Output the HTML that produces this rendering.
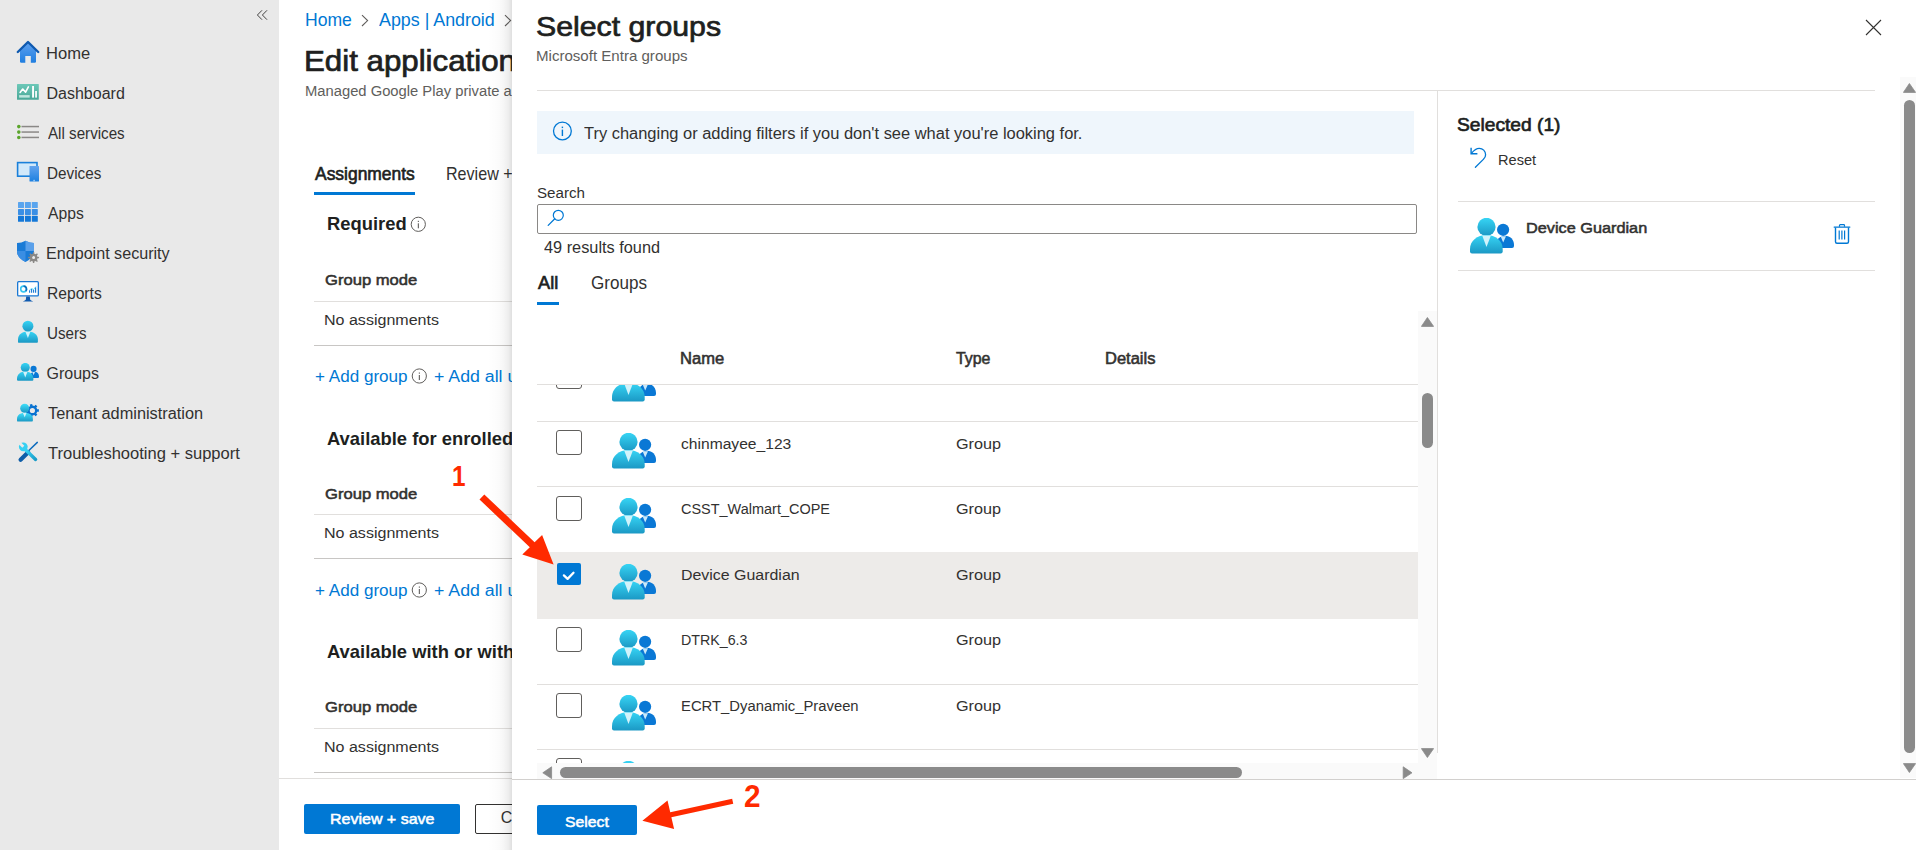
<!DOCTYPE html>
<html><head><meta charset="utf-8"><style>
html,body{margin:0;padding:0;width:1916px;height:850px;overflow:hidden;background:#fff;font-family:'Liberation Sans', sans-serif;}
body{position:relative;}
svg{display:block;}
</style></head><body>
<div style="position:absolute;left:0px;top:0px;width:279px;height:850px;background:#e9e9e9;"></div>
<svg style="position:absolute;left:255px;top:8px;" width="14" height="14" viewBox="0 0 14 14"><path d="M7,2.3 L2.4,7 L7,11.7 M12,2.3 L7.4,7 L12,11.7" fill="none" stroke="#3b3a39" stroke-width="0.95"/></svg>
<span style="position:absolute;left:46.47px;top:45.60px;font-size:16px;line-height:16px;font-weight:400;color:#323130;white-space:pre;transform:scaleX(1.0341);transform-origin:0 0;">Home</span>
<span style="position:absolute;left:46.50px;top:85.60px;font-size:16px;line-height:16px;font-weight:400;color:#323130;white-space:pre;">Dashboard</span>
<span style="position:absolute;left:47.50px;top:125.60px;font-size:16px;line-height:16px;font-weight:400;color:#323130;white-space:pre;transform:scaleX(0.9481);transform-origin:0 0;">All services</span>
<span style="position:absolute;left:46.55px;top:165.60px;font-size:16px;line-height:16px;font-weight:400;color:#323130;white-space:pre;transform:scaleX(0.9536);transform-origin:0 0;">Devices</span>
<span style="position:absolute;left:47.50px;top:205.60px;font-size:16px;line-height:16px;font-weight:400;color:#323130;white-space:pre;transform:scaleX(0.9806);transform-origin:0 0;">Apps</span>
<span style="position:absolute;left:46.49px;top:245.60px;font-size:16px;line-height:16px;font-weight:400;color:#323130;white-space:pre;transform:scaleX(1.0074);transform-origin:0 0;">Endpoint security</span>
<span style="position:absolute;left:46.52px;top:285.60px;font-size:16px;line-height:16px;font-weight:400;color:#323130;white-space:pre;transform:scaleX(0.9764);transform-origin:0 0;">Reports</span>
<span style="position:absolute;left:46.55px;top:325.60px;font-size:16px;line-height:16px;font-weight:400;color:#323130;white-space:pre;transform:scaleX(0.9475);transform-origin:0 0;">Users</span>
<span style="position:absolute;left:46.50px;top:365.60px;font-size:16px;line-height:16px;font-weight:400;color:#323130;white-space:pre;">Groups</span>
<span style="position:absolute;left:47.50px;top:405.60px;font-size:16px;line-height:16px;font-weight:400;color:#323130;white-space:pre;transform:scaleX(1.0199);transform-origin:0 0;">Tenant administration</span>
<span style="position:absolute;left:47.50px;top:445.60px;font-size:16px;line-height:16px;font-weight:400;color:#323130;white-space:pre;transform:scaleX(1.0328);transform-origin:0 0;">Troubleshooting + support</span>
<svg style="position:absolute;left:16px;top:40px;" width="24" height="24" viewBox="0 0 24 24"><defs><linearGradient id="hm" x1="0" y1="0" x2="0" y2="1"><stop offset="0" stop-color="#5ea0ef"/><stop offset="1" stop-color="#1f7ee0"/></linearGradient></defs>
<path d="M4,9.5 L12,2.5 L20,9.5 L20,21.5 Q20,22.8 18.7,22.8 L5.3,22.8 Q4,22.8 4,21.5 Z" fill="url(#hm)"/>
<rect x="9.3" y="16" width="5.5" height="7" fill="#e9e9e9"/>
<path d="M1.8,12 L12,2 L22.2,12" fill="none" stroke="#0f5ab0" stroke-width="2.4" stroke-linejoin="round" stroke-linecap="round"/></svg>
<svg style="position:absolute;left:17px;top:84px;" width="22" height="16" viewBox="0 0 22 16"><defs><linearGradient id="db" x1="0" y1="0" x2="0" y2="1"><stop offset="0" stop-color="#6cc8b8"/><stop offset="1" stop-color="#4aa898"/></linearGradient></defs>
<rect x="0" y="0" width="21.8" height="15.8" rx="0.6" fill="url(#db)"/>
<path d="M3.1,8.4 L5.7,5 L8.6,8.1 L11.4,2.9" fill="none" stroke="#fff" stroke-width="1.6" stroke-linejoin="round" stroke-linecap="round"/>
<rect x="2.1" y="11.1" width="10.6" height="2.5" fill="#bfe6de"/>
<rect x="15.1" y="2" width="1.9" height="11.6" fill="#fff"/><rect x="18.2" y="7" width="1.7" height="6.6" fill="#fff"/></svg>
<svg style="position:absolute;left:16px;top:124px;" width="24" height="16" viewBox="0 0 24 16"><circle cx="2.8" cy="2.6" r="1.8" fill="#5ba52c"/><circle cx="2.8" cy="8.1" r="1.8" fill="#5ba52c"/><circle cx="2.8" cy="13.5" r="1.8" fill="#5ba52c"/>
<rect x="5.5" y="1.8" width="17.5" height="1.5" fill="#8a8886"/><rect x="5.5" y="7.3" width="17.5" height="1.5" fill="#8a8886"/><rect x="5.5" y="12.7" width="17.5" height="1.5" fill="#8a8886"/></svg>
<svg style="position:absolute;left:16px;top:161px;" width="24" height="22" viewBox="0 0 24 22"><rect x="1.6" y="1.6" width="19.4" height="13.6" fill="#d2e9fa" stroke="#1a80da" stroke-width="1.6"/>
<defs><linearGradient id="dv" x1="0" y1="0" x2="0" y2="1"><stop offset="0" stop-color="#63a4ee"/><stop offset="1" stop-color="#1c80e0"/></linearGradient></defs><rect x="13.5" y="5" width="9.5" height="15.6" rx="0.5" fill="url(#dv)"/><rect x="17.3" y="18.8" width="1.6" height="1.8" fill="#9ccaf5"/></svg>
<svg style="position:absolute;left:18px;top:202px;" width="20" height="20" viewBox="0 0 20 20"><rect x="0.0" y="0.0" width="6" height="6" rx="0.6" fill="#5aa5ee"/><rect x="6.9" y="0.0" width="6" height="6" rx="0.6" fill="#5aa5ee"/><rect x="13.8" y="0.0" width="6" height="6" rx="0.6" fill="#5aa5ee"/><rect x="0.0" y="6.9" width="6" height="6" rx="0.6" fill="#3a8fe5"/><rect x="6.9" y="6.9" width="6" height="6" rx="0.6" fill="#3a8fe5"/><rect x="13.8" y="6.9" width="6" height="6" rx="0.6" fill="#3a8fe5"/><rect x="0.0" y="13.8" width="6" height="6" rx="0.6" fill="#1478d8"/><rect x="6.9" y="13.8" width="6" height="6" rx="0.6" fill="#1478d8"/><rect x="13.8" y="13.8" width="6" height="6" rx="0.6" fill="#1478d8"/></svg>
<svg style="position:absolute;left:16px;top:240px;" width="24" height="24" viewBox="0 0 24 24"><path d="M1,3 Q5.5,3 9.5,0.8 Q13.5,3 18,3 L18,11 Q18,18 9.5,22 Q1,18 1,11 Z" fill="#1a7bd6"/>
<path d="M9.5,0.8 Q13.5,3 18,3 L18,11 L9.5,11 Z" fill="#5aa0ea"/>
<path d="M1,11 L9.5,11 L9.5,22 Q1,18 1,11 Z" fill="#3a8ee3"/>
<path d="M21.32,16.14 L21.54,16.90 L23.05,16.87 L23.05,18.33 L21.54,18.30 L21.32,19.06 L21.26,19.20 L20.88,19.89 L21.97,20.94 L20.94,21.97 L19.89,20.88 L19.20,21.26 L19.06,21.32 L18.30,21.54 L18.33,23.05 L16.87,23.05 L16.90,21.54 L16.14,21.32 L16.00,21.26 L15.31,20.88 L14.26,21.97 L13.23,20.94 L14.32,19.89 L13.94,19.20 L13.88,19.06 L13.66,18.30 L12.15,18.33 L12.15,16.87 L13.66,16.90 L13.88,16.14 L13.94,16.00 L14.32,15.31 L13.23,14.26 L14.26,13.23 L15.31,14.32 L16.00,13.94 L16.14,13.88 L16.90,13.66 L16.87,12.15 L18.33,12.15 L18.30,13.66 L19.06,13.88 L19.20,13.94 L19.89,14.32 L20.94,13.23 L21.97,14.26 L20.88,15.31 L21.26,16.00 Z M19.10,17.60 A1.5,1.5 0 1 0 16.10,17.60 A1.5,1.5 0 1 0 19.10,17.60 Z" fill="#8a8886" fill-rule="evenodd"/></svg>
<svg style="position:absolute;left:16px;top:280px;" width="24" height="23" viewBox="0 0 24 23"><rect x="1.65" y="1.65" width="20.7" height="14.3" rx="1" fill="#fff" stroke="#1a78d4" stroke-width="1.3"/>
<circle cx="7.6" cy="9" r="2.9" fill="none" stroke="#38c6f0" stroke-width="1.6"/>
<path d="M7.6,6.1 A2.9,2.9 0 0 1 9.7,11" fill="none" stroke="#0f6cbd" stroke-width="1.6"/>
<path d="M13.6,12.8 L13.6,10.3 M15.6,12.8 L15.6,9 M17.6,12.8 L17.6,9.8 M19.6,12.8 L19.6,7.2" stroke="#1a78d4" stroke-width="1.1"/>
<path d="M13.5,10 L15.6,8.5 L17.6,9.5 L20,6.5" fill="none" stroke="#40d0f5" stroke-width="0.8"/>
<path d="M10.2,16.5 L13.8,16.5 L14.2,19.8 Q15.5,20.8 17.2,21.5 L6.8,21.5 Q8.5,20.8 9.8,19.8 Z" fill="#0f5ab0"/></svg>
<svg style="position:absolute;left:17px;top:320px;" width="22" height="24" viewBox="0 0 22 24"><defs><linearGradient id="us" x1="0" y1="0" x2="0" y2="1"><stop offset="0" stop-color="#37d5f5"/><stop offset="1" stop-color="#1b98c4"/></linearGradient></defs>
<circle cx="10.9" cy="6.2" r="5.5" fill="url(#us)"/>
<path d="M1.5,22.7 Q1,22.7 1,21.5 L1,19.5 C1,14.5 5,11.5 10.9,11.5 C16.8,11.5 20.9,14.5 20.9,19.5 L20.9,21.5 Q20.9,22.7 20,22.7 Z" fill="url(#us)"/>
<path d="M8.4,11.8 L13.4,11.8 L10.9,18 Z" fill="#d2f3fb"/></svg>
<div style="position:absolute;left:17px;top:363px;width:22px;height:18px;overflow:hidden">
<svg style="position:absolute;left:0px;top:0px;" width="23" height="19" viewBox="0 0 23 19"><defs>
<linearGradient id="gc00" x1="0" y1="0" x2="0" y2="1"><stop offset="0" stop-color="#37d5f5"/><stop offset="1" stop-color="#1b98c4"/></linearGradient>
</defs>
<g transform="scale(0.5)">
<circle cx="33.1" cy="11.8" r="6.1" fill="#0a78d5"/>
<path d="M26.2,29.9 L26.2,27 C26.2,21.5 30,17.7 35.1,17.7 C40.2,17.7 44,21.5 44,27 L44,28 Q44,29.9 42,29.9 Z" fill="#0a78d5"/>
<path d="M30.6,18.2 L36,18.2 L33.2,24.6 Z" fill="#c9e8fa"/>
<circle cx="16.5" cy="8.9" r="9.1" fill="url(#gc00)"/>
<path d="M2,35.6 Q0,35.6 0,33.2 L0,31 C0,22.6 7.2,16.9 16.4,16.9 C25.6,16.9 32.7,22.6 32.7,31 L32.7,33.2 Q32.7,35.6 30.7,35.6 Z" fill="url(#gc00)"/>
<path d="M12.2,17.4 L20.9,17.4 L16.5,29.1 Z" fill="#d2f3fb"/>
</g></svg>
</div>
<svg style="position:absolute;left:16px;top:401px;" width="24" height="22" viewBox="0 0 24 22"><defs><linearGradient id="ta" x1="0" y1="0" x2="0" y2="1"><stop offset="0" stop-color="#40e0fa"/><stop offset="1" stop-color="#1b98c4"/></linearGradient></defs>
<path d="M20.86,7.47 L21.15,8.30 L22.89,8.29 L22.89,10.71 L21.15,10.70 L20.86,11.53 L20.77,11.72 L20.30,12.47 L21.39,13.81 L19.49,15.33 L18.43,13.96 L17.60,14.25 L17.38,14.30 L16.51,14.40 L16.14,16.09 L13.77,15.55 L14.18,13.87 L13.43,13.40 L13.26,13.26 L12.64,12.64 L11.08,13.41 L10.03,11.22 L11.60,10.48 L11.50,9.61 L11.50,9.39 L11.60,8.52 L10.03,7.78 L11.08,5.59 L12.64,6.36 L13.26,5.74 L13.43,5.60 L14.18,5.13 L13.77,3.45 L16.14,2.91 L16.51,4.60 L17.38,4.70 L17.60,4.75 L18.43,5.04 L19.49,3.67 L21.39,5.19 L20.30,6.53 L20.77,7.28 Z M19.00,9.50 A2.6,2.6 0 1 0 13.80,9.50 A2.6,2.6 0 1 0 19.00,9.50 Z" fill="#0a72d0" fill-rule="evenodd"/>
<circle cx="8.7" cy="7.2" r="4.5" fill="url(#ta)"/>
<path d="M1.5,20.6 Q1,20.6 1,19.5 L1,18 C1,14 4.5,11.8 8.7,11.8 C13,11.8 16.9,14 16.9,18 L16.9,19.5 Q16.9,20.6 16,20.6 Z" fill="url(#ta)"/>
<path d="M6.9,12 L10.5,12 L8.7,16.3 Z" fill="#d2f3fb"/></svg>
<svg style="position:absolute;left:16px;top:440px;" width="24" height="24" viewBox="0 0 24 24"><defs><linearGradient id="wr" x1="0" y1="0" x2="1" y2="1"><stop offset="0" stop-color="#3ad6f6"/><stop offset="1" stop-color="#1a9cc8"/></linearGradient></defs>
<path d="M21.3,2.4 L12.6,10.7" stroke="#0f6cbd" stroke-width="1.5" stroke-linecap="round"/>
<path d="M12.2,12.3 L4.6,19.8" stroke="#0f5ea8" stroke-width="4.2" stroke-linecap="round"/>
<path d="M9.5,9.8 L19.6,19.4" stroke="url(#wr)" stroke-width="3.4" stroke-linecap="round"/>
<circle cx="7.3" cy="6.8" r="4.4" fill="#36d0f2"/>
<path d="M7.3,6.8 L2.8,2.3" stroke="#e9e9e9" stroke-width="2.8" stroke-linecap="butt"/></svg>
<span style="position:absolute;left:304.65px;top:11.28px;font-size:18.5px;line-height:18.5px;font-weight:400;color:#0078d4;white-space:pre;transform:scaleX(0.9500);transform-origin:0 0;">Home</span>
<svg style="position:absolute;left:359px;top:13px;" width="12" height="15" viewBox="0 0 12 15"><path d="M3,2.2 L8.6,7.6 L3,13" fill="none" stroke="#605e5c" stroke-width="1.1"/></svg>
<span style="position:absolute;left:379.00px;top:11.28px;font-size:18.5px;line-height:18.5px;font-weight:400;color:#0078d4;white-space:pre;transform:scaleX(0.9647);transform-origin:0 0;">Apps | Android</span>
<svg style="position:absolute;left:502px;top:13px;" width="12" height="15" viewBox="0 0 12 15"><path d="M3,2.2 L8.6,7.6 L3,13" fill="none" stroke="#605e5c" stroke-width="1.1"/></svg>
<span style="position:absolute;left:304.08px;top:45.83px;font-size:29.5px;line-height:29.5px;font-weight:400;color:#201f1e;white-space:pre;-webkit-text-stroke:0.72px #201f1e;transform:scaleX(1.0591);transform-origin:0 0;">Edit application</span>
<span style="position:absolute;left:304.55px;top:83.70px;font-size:14px;line-height:14px;font-weight:400;color:#605e5c;white-space:pre;transform:scaleX(1.0544);transform-origin:0 0;">Managed Google Play private app</span>
<span style="position:absolute;left:314.90px;top:165.28px;font-size:18.5px;line-height:18.5px;font-weight:400;color:#201f1e;white-space:pre;-webkit-text-stroke:0.65px #201f1e;transform:scaleX(0.9425);transform-origin:0 0;">Assignments</span>
<span style="position:absolute;left:445.53px;top:165.28px;font-size:18.5px;line-height:18.5px;font-weight:400;color:#323130;white-space:pre;transform:scaleX(0.8700);transform-origin:0 0;">Review + save</span>
<div style="position:absolute;left:314px;top:192px;width:101px;height:3px;background:#0078d4;"></div>
<span style="position:absolute;left:326.61px;top:214.58px;font-size:18.5px;line-height:18.5px;font-weight:700;color:#201f1e;white-space:pre;transform:scaleX(0.9936);transform-origin:0 0;">Required</span>
<span style="position:absolute;left:324.70px;top:272.22px;font-size:15.5px;line-height:15.5px;font-weight:400;color:#323130;white-space:pre;-webkit-text-stroke:0.54px #323130;transform:scaleX(1.0709);transform-origin:0 0;">Group mode</span>
<div style="position:absolute;left:314px;top:301px;width:198px;height:1px;background:#e1dfdd;"></div>
<span style="position:absolute;left:323.67px;top:311.82px;font-size:15.5px;line-height:15.5px;font-weight:400;color:#323130;white-space:pre;transform:scaleX(1.0345);transform-origin:0 0;">No assignments</span>
<div style="position:absolute;left:314px;top:345px;width:198px;height:1px;background:#c8c6c4;"></div>
<span style="position:absolute;left:315.13px;top:369.40px;font-size:16px;line-height:16px;font-weight:400;color:#0078d4;white-space:pre;transform:scaleX(1.0671);transform-origin:0 0;">+ Add group</span>
<svg style="position:absolute;left:411px;top:368px;" width="17" height="17" viewBox="0 0 17 17"><circle cx="8.3" cy="8" r="7.1" fill="none" stroke="#605e5c" stroke-width="1"/><rect x="7.8" y="7" width="1.1" height="5" fill="#605e5c"/><rect x="7.8" y="4.5" width="1.1" height="1.2" fill="#605e5c"/></svg>
<span style="position:absolute;left:433.59px;top:369.40px;font-size:16px;line-height:16px;font-weight:400;color:#0078d4;white-space:pre;transform:scaleX(1.1083);transform-origin:0 0;">+ Add all users</span>
<span style="position:absolute;left:326.81px;top:430.47px;font-size:18.5px;line-height:18.5px;font-weight:700;color:#201f1e;white-space:pre;transform:scaleX(0.9936);transform-origin:0 0;">Available for enrolled devices</span>
<span style="position:absolute;left:324.70px;top:485.82px;font-size:15.5px;line-height:15.5px;font-weight:400;color:#323130;white-space:pre;-webkit-text-stroke:0.54px #323130;transform:scaleX(1.0709);transform-origin:0 0;">Group mode</span>
<div style="position:absolute;left:314px;top:514px;width:198px;height:1px;background:#e1dfdd;"></div>
<span style="position:absolute;left:323.67px;top:525.43px;font-size:15.5px;line-height:15.5px;font-weight:400;color:#323130;white-space:pre;transform:scaleX(1.0345);transform-origin:0 0;">No assignments</span>
<div style="position:absolute;left:314px;top:558px;width:198px;height:1px;background:#c8c6c4;"></div>
<span style="position:absolute;left:315.13px;top:583.00px;font-size:16px;line-height:16px;font-weight:400;color:#0078d4;white-space:pre;transform:scaleX(1.0671);transform-origin:0 0;">+ Add group</span>
<svg style="position:absolute;left:411px;top:582px;" width="17" height="17" viewBox="0 0 17 17"><circle cx="8.3" cy="8" r="7.1" fill="none" stroke="#605e5c" stroke-width="1"/><rect x="7.8" y="7" width="1.1" height="5" fill="#605e5c"/><rect x="7.8" y="4.5" width="1.1" height="1.2" fill="#605e5c"/></svg>
<span style="position:absolute;left:433.59px;top:583.00px;font-size:16px;line-height:16px;font-weight:400;color:#0078d4;white-space:pre;transform:scaleX(1.1083);transform-origin:0 0;">+ Add all users</span>
<span style="position:absolute;left:326.81px;top:642.77px;font-size:18.5px;line-height:18.5px;font-weight:700;color:#201f1e;white-space:pre;transform:scaleX(0.9936);transform-origin:0 0;">Available with or without enrollment</span>
<span style="position:absolute;left:324.70px;top:699.42px;font-size:15.5px;line-height:15.5px;font-weight:400;color:#323130;white-space:pre;-webkit-text-stroke:0.54px #323130;transform:scaleX(1.0709);transform-origin:0 0;">Group mode</span>
<div style="position:absolute;left:314px;top:728px;width:198px;height:1px;background:#e1dfdd;"></div>
<span style="position:absolute;left:323.67px;top:739.03px;font-size:15.5px;line-height:15.5px;font-weight:400;color:#323130;white-space:pre;transform:scaleX(1.0345);transform-origin:0 0;">No assignments</span>
<div style="position:absolute;left:314px;top:772px;width:198px;height:1px;background:#c8c6c4;"></div>
<span style="position:absolute;left:315.13px;top:796.60px;font-size:16px;line-height:16px;font-weight:400;color:#0078d4;white-space:pre;transform:scaleX(1.0671);transform-origin:0 0;">+ Add group</span>
<svg style="position:absolute;left:411px;top:795px;" width="17" height="17" viewBox="0 0 17 17"><circle cx="8.3" cy="8" r="7.1" fill="none" stroke="#605e5c" stroke-width="1"/><rect x="7.8" y="7" width="1.1" height="5" fill="#605e5c"/><rect x="7.8" y="4.5" width="1.1" height="1.2" fill="#605e5c"/></svg>
<span style="position:absolute;left:433.59px;top:796.60px;font-size:16px;line-height:16px;font-weight:400;color:#0078d4;white-space:pre;transform:scaleX(1.1083);transform-origin:0 0;">+ Add all users</span>
<svg style="position:absolute;left:410px;top:216px;" width="17" height="17" viewBox="0 0 17 17"><circle cx="8.3" cy="8.3" r="7.1" fill="none" stroke="#605e5c" stroke-width="1"/><rect x="7.8" y="7.3" width="1.1" height="5" fill="#605e5c"/><rect x="7.8" y="4.8" width="1.1" height="1.2" fill="#605e5c"/></svg>
<div style="position:absolute;left:279px;top:778px;width:233px;height:72px;background:#fff;"></div>
<div style="position:absolute;left:279px;top:778px;width:233px;height:1px;background:#e1dfdd;"></div>
<div style="position:absolute;left:304px;top:804px;width:156px;height:30px;background:#0078d4;border-radius:2px"></div>
<span style="position:absolute;left:329.93px;top:810.85px;font-size:15px;line-height:15px;font-weight:400;color:#fff;white-space:pre;-webkit-text-stroke:0.53px #fff;transform:scaleX(1.0660);transform-origin:0 0;">Review + save</span>
<div style="position:absolute;left:475px;top:804px;width:80px;height:30px;box-sizing:border-box;border:1px solid #323130;border-radius:2px"></div>
<span style="position:absolute;left:500.80px;top:810.40px;font-size:16px;line-height:16px;font-weight:400;color:#323130;white-space:pre;">Cancel</span>
<div style="position:absolute;left:488px;top:0;width:24px;height:850px;background:linear-gradient(to right, rgba(0,0,0,0), rgba(0,0,0,0.015) 45%, rgba(0,0,0,0.035) 65%, rgba(0,0,0,0.07) 85%, rgba(0,0,0,0.125))"></div>
<div style="position:absolute;left:512px;top:0px;width:1404px;height:850px;background:#fff;"></div>
<span style="position:absolute;left:536.24px;top:11.98px;font-size:28.5px;line-height:28.5px;font-weight:400;color:#201f1e;white-space:pre;-webkit-text-stroke:0.72px #201f1e;transform:scaleX(1.0618);transform-origin:0 0;">Select groups</span>
<span style="position:absolute;left:536.28px;top:49.02px;font-size:14.8px;line-height:14.8px;font-weight:400;color:#605e5c;white-space:pre;transform:scaleX(1.0182);transform-origin:0 0;">Microsoft Entra groups</span>
<svg style="position:absolute;left:1864px;top:18px;" width="19" height="19" viewBox="0 0 19 19"><path d="M2,2 L17,17 M17,2 L2,17" stroke="#323130" stroke-width="1.1"/></svg>
<div style="position:absolute;left:537px;top:90px;width:1338px;height:1px;background:#e1dfdd;"></div>
<div style="position:absolute;left:1437px;top:91px;width:1px;height:662px;background:#e1dfdd;"></div>
<div style="position:absolute;left:537px;top:111px;width:877px;height:43px;background:#eff6fc;"></div>
<svg style="position:absolute;left:552px;top:121px;" width="21" height="21" viewBox="0 0 21 21"><circle cx="10.4" cy="10" r="8.9" fill="none" stroke="#0078d4" stroke-width="1.3"/><rect x="9.7" y="8.6" width="1.4" height="6.4" fill="#0078d4"/><rect x="9.7" y="5.6" width="1.4" height="1.5" fill="#0078d4"/></svg>
<span style="position:absolute;left:584.00px;top:126.20px;font-size:16px;line-height:16px;font-weight:400;color:#323130;white-space:pre;transform:scaleX(1.0279);transform-origin:0 0;">Try changing or adding filters if you don't see what you're looking for.</span>
<span style="position:absolute;left:536.51px;top:184.59px;font-size:15.3px;line-height:15.3px;font-weight:400;color:#323130;white-space:pre;transform:scaleX(0.9915);transform-origin:0 0;">Search</span>
<div style="position:absolute;left:537px;top:204px;width:880px;height:30px;box-sizing:border-box;border:1px solid #8a8886;border-radius:2px"></div>
<svg style="position:absolute;left:546px;top:208px;" width="20" height="20" viewBox="0 0 20 20"><circle cx="12.3" cy="7.3" r="5" fill="none" stroke="#0078d4" stroke-width="1.2"/><path d="M8.8,10.8 L2.2,17.4" stroke="#0078d4" stroke-width="1.3" stroke-linecap="round"/></svg>
<span style="position:absolute;left:543.60px;top:239.57px;font-size:15.8px;line-height:15.8px;font-weight:400;color:#323130;white-space:pre;transform:scaleX(1.0324);transform-origin:0 0;">49 results found</span>
<span style="position:absolute;left:537.90px;top:273.15px;font-size:19px;line-height:19px;font-weight:400;color:#201f1e;white-space:pre;-webkit-text-stroke:0.67px #201f1e;transform:scaleX(0.9571);transform-origin:0 0;">All</span>
<span style="position:absolute;left:590.90px;top:273.15px;font-size:19px;line-height:19px;font-weight:400;color:#323130;white-space:pre;transform:scaleX(0.8984);transform-origin:0 0;">Groups</span>
<div style="position:absolute;left:537px;top:302px;width:22px;height:3px;background:#0078d4;"></div>
<span style="position:absolute;left:679.95px;top:350.87px;font-size:15.8px;line-height:15.8px;font-weight:400;color:#323130;white-space:pre;-webkit-text-stroke:0.55px #323130;transform:scaleX(1.0488);transform-origin:0 0;">Name</span>
<span style="position:absolute;left:956.30px;top:350.87px;font-size:15.8px;line-height:15.8px;font-weight:400;color:#323130;white-space:pre;-webkit-text-stroke:0.55px #323130;transform:scaleX(1.0059);transform-origin:0 0;">Type</span>
<span style="position:absolute;left:1105.26px;top:350.87px;font-size:15.8px;line-height:15.8px;font-weight:400;color:#323130;white-space:pre;-webkit-text-stroke:0.55px #323130;transform:scaleX(1.0447);transform-origin:0 0;">Details</span>
<div style="position:absolute;left:537px;top:384px;width:881px;height:1px;background:#e1dfdd;"></div>
<div style="position:absolute;left:537px;top:385px;width:881px;height:378px;overflow:hidden">
<div style="position:absolute;left:19px;top:-21.4px;width:26px;height:25px;box-sizing:border-box;border:1px solid #605e5c;border-radius:3px"></div>
<svg style="position:absolute;left:75px;top:-19px;" width="45" height="37" viewBox="0 0 45 37"><defs>
<linearGradient id="gc75-19" x1="0" y1="0" x2="0" y2="1"><stop offset="0" stop-color="#37d5f5"/><stop offset="1" stop-color="#1b98c4"/></linearGradient>
</defs>
<g transform="scale(1.0)">
<circle cx="33.1" cy="11.8" r="6.1" fill="#0a78d5"/>
<path d="M26.2,29.9 L26.2,27 C26.2,21.5 30,17.7 35.1,17.7 C40.2,17.7 44,21.5 44,27 L44,28 Q44,29.9 42,29.9 Z" fill="#0a78d5"/>
<path d="M30.6,18.2 L36,18.2 L33.2,24.6 Z" fill="#c9e8fa"/>
<circle cx="16.5" cy="8.9" r="9.1" fill="url(#gc75-19)"/>
<path d="M2,35.6 Q0,35.6 0,33.2 L0,31 C0,22.6 7.2,16.9 16.4,16.9 C25.6,16.9 32.7,22.6 32.7,31 L32.7,33.2 Q32.7,35.6 30.7,35.6 Z" fill="url(#gc75-19)"/>
<path d="M12.2,17.4 L20.9,17.4 L16.5,29.1 Z" fill="#d2f3fb"/>
</g></svg>
<div style="position:absolute;left:0px;top:36px;width:881px;height:1px;background:#e1dfdd;"></div>
<div style="position:absolute;left:19px;top:45.3px;width:26px;height:25px;box-sizing:border-box;border:1px solid #605e5c;border-radius:3px"></div>
<svg style="position:absolute;left:75px;top:48px;" width="45" height="37" viewBox="0 0 45 37"><defs>
<linearGradient id="gc7548" x1="0" y1="0" x2="0" y2="1"><stop offset="0" stop-color="#37d5f5"/><stop offset="1" stop-color="#1b98c4"/></linearGradient>
</defs>
<g transform="scale(1.0)">
<circle cx="33.1" cy="11.8" r="6.1" fill="#0a78d5"/>
<path d="M26.2,29.9 L26.2,27 C26.2,21.5 30,17.7 35.1,17.7 C40.2,17.7 44,21.5 44,27 L44,28 Q44,29.9 42,29.9 Z" fill="#0a78d5"/>
<path d="M30.6,18.2 L36,18.2 L33.2,24.6 Z" fill="#c9e8fa"/>
<circle cx="16.5" cy="8.9" r="9.1" fill="url(#gc7548)"/>
<path d="M2,35.6 Q0,35.6 0,33.2 L0,31 C0,22.6 7.2,16.9 16.4,16.9 C25.6,16.9 32.7,22.6 32.7,31 L32.7,33.2 Q32.7,35.6 30.7,35.6 Z" fill="url(#gc7548)"/>
<path d="M12.2,17.4 L20.9,17.4 L16.5,29.1 Z" fill="#d2f3fb"/>
</g></svg>
<span style="position:absolute;left:143.97px;top:50.50px;font-size:15.2px;line-height:15.2px;font-weight:400;color:#323130;white-space:pre;transform:scaleX(1.0283);transform-origin:0 0;">chinmayee_123</span>
<span style="position:absolute;left:419.13px;top:50.50px;font-size:15.2px;line-height:15.2px;font-weight:400;color:#323130;white-space:pre;transform:scaleX(1.0683);transform-origin:0 0;">Group</span>
<div style="position:absolute;left:0px;top:101px;width:881px;height:1px;background:#e1dfdd;"></div>
<div style="position:absolute;left:19px;top:110.9px;width:26px;height:25px;box-sizing:border-box;border:1px solid #605e5c;border-radius:3px"></div>
<svg style="position:absolute;left:75px;top:113px;" width="45" height="37" viewBox="0 0 45 37"><defs>
<linearGradient id="gc75113" x1="0" y1="0" x2="0" y2="1"><stop offset="0" stop-color="#37d5f5"/><stop offset="1" stop-color="#1b98c4"/></linearGradient>
</defs>
<g transform="scale(1.0)">
<circle cx="33.1" cy="11.8" r="6.1" fill="#0a78d5"/>
<path d="M26.2,29.9 L26.2,27 C26.2,21.5 30,17.7 35.1,17.7 C40.2,17.7 44,21.5 44,27 L44,28 Q44,29.9 42,29.9 Z" fill="#0a78d5"/>
<path d="M30.6,18.2 L36,18.2 L33.2,24.6 Z" fill="#c9e8fa"/>
<circle cx="16.5" cy="8.9" r="9.1" fill="url(#gc75113)"/>
<path d="M2,35.6 Q0,35.6 0,33.2 L0,31 C0,22.6 7.2,16.9 16.4,16.9 C25.6,16.9 32.7,22.6 32.7,31 L32.7,33.2 Q32.7,35.6 30.7,35.6 Z" fill="url(#gc75113)"/>
<path d="M12.2,17.4 L20.9,17.4 L16.5,29.1 Z" fill="#d2f3fb"/>
</g></svg>
<span style="position:absolute;left:144.05px;top:116.12px;font-size:15.2px;line-height:15.2px;font-weight:400;color:#323130;white-space:pre;transform:scaleX(0.9523);transform-origin:0 0;">CSST_Walmart_COPE</span>
<span style="position:absolute;left:419.13px;top:116.12px;font-size:15.2px;line-height:15.2px;font-weight:400;color:#323130;white-space:pre;transform:scaleX(1.0683);transform-origin:0 0;">Group</span>
<div style="position:absolute;left:0px;top:167px;width:881px;height:67px;background:#edebe9;"></div>
<div style="position:absolute;left:19.8px;top:177.6px;width:24.5px;height:22.5px;background:#0078d4;border-radius:2px"></div>
<svg style="position:absolute;left:20px;top:177px;" width="24" height="23" viewBox="0 0 24 23"><path d="M6.9,13.4 L10.6,16.9 L16.5,10.8" fill="none" stroke="#fff" stroke-width="2.3" stroke-linecap="round" stroke-linejoin="round"/></svg>
<svg style="position:absolute;left:75px;top:179px;" width="45" height="37" viewBox="0 0 45 37"><defs>
<linearGradient id="gc75179" x1="0" y1="0" x2="0" y2="1"><stop offset="0" stop-color="#37d5f5"/><stop offset="1" stop-color="#1b98c4"/></linearGradient>
</defs>
<g transform="scale(1.0)">
<circle cx="33.1" cy="11.8" r="6.1" fill="#0a78d5"/>
<path d="M26.2,29.9 L26.2,27 C26.2,21.5 30,17.7 35.1,17.7 C40.2,17.7 44,21.5 44,27 L44,28 Q44,29.9 42,29.9 Z" fill="#0a78d5"/>
<path d="M30.6,18.2 L36,18.2 L33.2,24.6 Z" fill="#c9e8fa"/>
<circle cx="16.5" cy="8.9" r="9.1" fill="url(#gc75179)"/>
<path d="M2,35.6 Q0,35.6 0,33.2 L0,31 C0,22.6 7.2,16.9 16.4,16.9 C25.6,16.9 32.7,22.6 32.7,31 L32.7,33.2 Q32.7,35.6 30.7,35.6 Z" fill="url(#gc75179)"/>
<path d="M12.2,17.4 L20.9,17.4 L16.5,29.1 Z" fill="#d2f3fb"/>
</g></svg>
<span style="position:absolute;left:143.95px;top:181.74px;font-size:15.2px;line-height:15.2px;font-weight:400;color:#323130;white-space:pre;transform:scaleX(1.0486);transform-origin:0 0;">Device Guardian</span>
<span style="position:absolute;left:419.13px;top:181.74px;font-size:15.2px;line-height:15.2px;font-weight:400;color:#323130;white-space:pre;transform:scaleX(1.0683);transform-origin:0 0;">Group</span>
<div style="position:absolute;left:19px;top:242.2px;width:26px;height:25px;box-sizing:border-box;border:1px solid #605e5c;border-radius:3px"></div>
<svg style="position:absolute;left:75px;top:245px;" width="45" height="37" viewBox="0 0 45 37"><defs>
<linearGradient id="gc75245" x1="0" y1="0" x2="0" y2="1"><stop offset="0" stop-color="#37d5f5"/><stop offset="1" stop-color="#1b98c4"/></linearGradient>
</defs>
<g transform="scale(1.0)">
<circle cx="33.1" cy="11.8" r="6.1" fill="#0a78d5"/>
<path d="M26.2,29.9 L26.2,27 C26.2,21.5 30,17.7 35.1,17.7 C40.2,17.7 44,21.5 44,27 L44,28 Q44,29.9 42,29.9 Z" fill="#0a78d5"/>
<path d="M30.6,18.2 L36,18.2 L33.2,24.6 Z" fill="#c9e8fa"/>
<circle cx="16.5" cy="8.9" r="9.1" fill="url(#gc75245)"/>
<path d="M2,35.6 Q0,35.6 0,33.2 L0,31 C0,22.6 7.2,16.9 16.4,16.9 C25.6,16.9 32.7,22.6 32.7,31 L32.7,33.2 Q32.7,35.6 30.7,35.6 Z" fill="url(#gc75245)"/>
<path d="M12.2,17.4 L20.9,17.4 L16.5,29.1 Z" fill="#d2f3fb"/>
</g></svg>
<span style="position:absolute;left:144.06px;top:247.36px;font-size:15.2px;line-height:15.2px;font-weight:400;color:#323130;white-space:pre;transform:scaleX(0.9377);transform-origin:0 0;">DTRK_6.3</span>
<span style="position:absolute;left:419.13px;top:247.36px;font-size:15.2px;line-height:15.2px;font-weight:400;color:#323130;white-space:pre;transform:scaleX(1.0683);transform-origin:0 0;">Group</span>
<div style="position:absolute;left:0px;top:299px;width:881px;height:1px;background:#e1dfdd;"></div>
<div style="position:absolute;left:19px;top:307.8px;width:26px;height:25px;box-sizing:border-box;border:1px solid #605e5c;border-radius:3px"></div>
<svg style="position:absolute;left:75px;top:310px;" width="45" height="37" viewBox="0 0 45 37"><defs>
<linearGradient id="gc75310" x1="0" y1="0" x2="0" y2="1"><stop offset="0" stop-color="#37d5f5"/><stop offset="1" stop-color="#1b98c4"/></linearGradient>
</defs>
<g transform="scale(1.0)">
<circle cx="33.1" cy="11.8" r="6.1" fill="#0a78d5"/>
<path d="M26.2,29.9 L26.2,27 C26.2,21.5 30,17.7 35.1,17.7 C40.2,17.7 44,21.5 44,27 L44,28 Q44,29.9 42,29.9 Z" fill="#0a78d5"/>
<path d="M30.6,18.2 L36,18.2 L33.2,24.6 Z" fill="#c9e8fa"/>
<circle cx="16.5" cy="8.9" r="9.1" fill="url(#gc75310)"/>
<path d="M2,35.6 Q0,35.6 0,33.2 L0,31 C0,22.6 7.2,16.9 16.4,16.9 C25.6,16.9 32.7,22.6 32.7,31 L32.7,33.2 Q32.7,35.6 30.7,35.6 Z" fill="url(#gc75310)"/>
<path d="M12.2,17.4 L20.9,17.4 L16.5,29.1 Z" fill="#d2f3fb"/>
</g></svg>
<span style="position:absolute;left:144.02px;top:312.98px;font-size:15.2px;line-height:15.2px;font-weight:400;color:#323130;white-space:pre;transform:scaleX(0.9756);transform-origin:0 0;">ECRT_Dyanamic_Praveen</span>
<span style="position:absolute;left:419.13px;top:312.98px;font-size:15.2px;line-height:15.2px;font-weight:400;color:#323130;white-space:pre;transform:scaleX(1.0683);transform-origin:0 0;">Group</span>
<div style="position:absolute;left:0px;top:364px;width:881px;height:1px;background:#e1dfdd;"></div>
<div style="position:absolute;left:19px;top:373.4px;width:26px;height:25px;box-sizing:border-box;border:1px solid #605e5c;border-radius:3px"></div>
<svg style="position:absolute;left:75px;top:376px;" width="45" height="37" viewBox="0 0 45 37"><defs>
<linearGradient id="gc75376" x1="0" y1="0" x2="0" y2="1"><stop offset="0" stop-color="#37d5f5"/><stop offset="1" stop-color="#1b98c4"/></linearGradient>
</defs>
<g transform="scale(1.0)">
<circle cx="33.1" cy="11.8" r="6.1" fill="#0a78d5"/>
<path d="M26.2,29.9 L26.2,27 C26.2,21.5 30,17.7 35.1,17.7 C40.2,17.7 44,21.5 44,27 L44,28 Q44,29.9 42,29.9 Z" fill="#0a78d5"/>
<path d="M30.6,18.2 L36,18.2 L33.2,24.6 Z" fill="#c9e8fa"/>
<circle cx="16.5" cy="8.9" r="9.1" fill="url(#gc75376)"/>
<path d="M2,35.6 Q0,35.6 0,33.2 L0,31 C0,22.6 7.2,16.9 16.4,16.9 C25.6,16.9 32.7,22.6 32.7,31 L32.7,33.2 Q32.7,35.6 30.7,35.6 Z" fill="url(#gc75376)"/>
<path d="M12.2,17.4 L20.9,17.4 L16.5,29.1 Z" fill="#d2f3fb"/>
</g></svg>
</div>
<div style="position:absolute;left:1418px;top:311px;width:19px;height:452px;background:#fafafa;"></div>
<svg style="position:absolute;left:1421px;top:317px;" width="13" height="10" viewBox="0 0 13 10"><path d="M6.4,0.5 L12.6,9.4 L0.4,9.4 Z" fill="#8a8a8a" stroke="#8a8a8a" stroke-width="0.8" stroke-linejoin="round"/></svg>
<div style="position:absolute;left:1422px;top:393px;width:11px;height:55px;background:#8a8a8a;border-radius:5.5px"></div>
<svg style="position:absolute;left:1421px;top:748px;" width="13" height="10" viewBox="0 0 13 10"><path d="M0.4,0.6 L12.6,0.6 L6.4,9.5 Z" fill="#8a8a8a" stroke="#8a8a8a" stroke-width="0.8" stroke-linejoin="round"/></svg>
<div style="position:absolute;left:537px;top:763px;width:900px;height:16px;background:#fafafa;"></div>
<svg style="position:absolute;left:542px;top:766px;" width="11" height="13" viewBox="0 0 11 13"><path d="M0.8,6.8 L9.6,0.8 L9.6,12.6 Z" fill="#8a8a8a" stroke="#8a8a8a" stroke-width="0.8" stroke-linejoin="round"/></svg>
<div style="position:absolute;left:560px;top:767px;width:682px;height:11px;background:#8a8a8a;border-radius:5.5px"></div>
<svg style="position:absolute;left:1402px;top:766px;" width="11" height="13" viewBox="0 0 11 13"><path d="M10,6.8 L1.2,0.8 L1.2,12.6 Z" fill="#8a8a8a" stroke="#8a8a8a" stroke-width="0.8" stroke-linejoin="round"/></svg>
<div style="position:absolute;left:1900px;top:77px;width:16px;height:701px;background:#fafafa;"></div>
<svg style="position:absolute;left:1903px;top:83px;" width="13" height="10" viewBox="0 0 13 10"><path d="M6.4,0.5 L12.6,9.4 L0.4,9.4 Z" fill="#8a8a8a" stroke="#8a8a8a" stroke-width="0.8" stroke-linejoin="round"/></svg>
<div style="position:absolute;left:1904px;top:99.5px;width:11px;height:653px;background:#8a8a8a;border-radius:5.5px"></div>
<svg style="position:absolute;left:1903px;top:763px;" width="13" height="10" viewBox="0 0 13 10"><path d="M0.4,0.6 L12.6,0.6 L6.4,9.5 Z" fill="#8a8a8a" stroke="#8a8a8a" stroke-width="0.8" stroke-linejoin="round"/></svg>
<span style="position:absolute;left:1456.96px;top:116.08px;font-size:18.5px;line-height:18.5px;font-weight:400;color:#201f1e;white-space:pre;-webkit-text-stroke:0.65px #201f1e;transform:scaleX(1.0378);transform-origin:0 0;">Selected (1)</span>
<svg style="position:absolute;left:1468px;top:146px;" width="20" height="23" viewBox="0 0 20 23"><path d="M3.1,1.8 L3.1,7.7 L9.4,7.7" fill="none" stroke="#0078d4" stroke-width="1.4"/><path d="M3.6,7.2 C6,4 8.8,2.3 11.3,2.3 C14.7,2.3 17.6,5 17.6,8.8 C17.6,10.5 16.9,11.9 15.6,13.1 L7.4,21.2" fill="none" stroke="#0078d4" stroke-width="1.3" stroke-linecap="round"/></svg>
<span style="position:absolute;left:1498.36px;top:152.12px;font-size:15.5px;line-height:15.5px;font-weight:400;color:#323130;white-space:pre;transform:scaleX(0.9425);transform-origin:0 0;">Reset</span>
<div style="position:absolute;left:1458px;top:201px;width:417px;height:1px;background:#e1dfdd;"></div>
<svg style="position:absolute;left:1470px;top:218px;" width="45" height="37" viewBox="0 0 45 37"><defs>
<linearGradient id="gc1470218" x1="0" y1="0" x2="0" y2="1"><stop offset="0" stop-color="#37d5f5"/><stop offset="1" stop-color="#1b98c4"/></linearGradient>
</defs>
<g transform="scale(1.0)">
<circle cx="33.1" cy="11.8" r="6.1" fill="#0a78d5"/>
<path d="M26.2,29.9 L26.2,27 C26.2,21.5 30,17.7 35.1,17.7 C40.2,17.7 44,21.5 44,27 L44,28 Q44,29.9 42,29.9 Z" fill="#0a78d5"/>
<path d="M30.6,18.2 L36,18.2 L33.2,24.6 Z" fill="#c9e8fa"/>
<circle cx="16.5" cy="8.9" r="9.1" fill="url(#gc1470218)"/>
<path d="M2,35.6 Q0,35.6 0,33.2 L0,31 C0,22.6 7.2,16.9 16.4,16.9 C25.6,16.9 32.7,22.6 32.7,31 L32.7,33.2 Q32.7,35.6 30.7,35.6 Z" fill="url(#gc1470218)"/>
<path d="M12.2,17.4 L20.9,17.4 L16.5,29.1 Z" fill="#d2f3fb"/>
</g></svg>
<span style="position:absolute;left:1525.85px;top:219.82px;font-size:15.5px;line-height:15.5px;font-weight:400;color:#323130;white-space:pre;-webkit-text-stroke:0.54px #323130;transform:scaleX(1.0500);transform-origin:0 0;">Device Guardian</span>
<svg style="position:absolute;left:1832px;top:222px;" width="20" height="24" viewBox="0 0 20 24"><path d="M2.2,5.1 L17.8,5.1" stroke="#0078d4" stroke-width="1.4" stroke-linecap="round"/><path d="M7.5,4.8 L7.5,3.4 Q7.5,2.6 8.3,2.6 L11.7,2.6 Q12.5,2.6 12.5,3.4 L12.5,4.8" fill="none" stroke="#0078d4" stroke-width="1.2"/><path d="M3.5,5.4 L3.5,19.7 Q3.5,21.2 5,21.2 L15,21.2 Q16.5,21.2 16.5,19.7 L16.5,5.4" fill="none" stroke="#0078d4" stroke-width="1.4"/><path d="M7.2,8.5 L7.2,17.5 M9.9,8.5 L9.9,17.5 M12.6,8.5 L12.6,17.5" stroke="#0078d4" stroke-width="1.2"/></svg>
<div style="position:absolute;left:1458px;top:270px;width:417px;height:1px;background:#e1dfdd;"></div>
<div style="position:absolute;left:512px;top:779px;width:1404px;height:1px;background:#d2d0ce;"></div>
<div style="position:absolute;left:537px;top:805px;width:100px;height:30px;background:#0078d4;border-radius:2px"></div>
<span style="position:absolute;left:565.30px;top:814.03px;font-size:15.5px;line-height:15.5px;font-weight:400;color:#fff;white-space:pre;-webkit-text-stroke:0.54px #fff;transform:scaleX(1.0163);transform-origin:0 0;">Select</span>
<svg style="position:absolute;left:0px;top:0px;pointer-events:none" width="1916" height="850" viewBox="0 0 1916 850"><polygon points="484.3,494.4 534.6,542.2 542.1,534.9 553.6,564.5 522.3,554.6 529.8,547.3 479.5,499.5" fill="#ff2a00"/>
<polygon points="732.15,798.76 670.25,812.2 667.5,800.5 642.4,820.7 674.1,829 671.35,817.3 733.25,803.84" fill="#ff2a00"/></svg>
<span style="position:absolute;left:452.36px;top:461.44px;font-size:29.6px;line-height:29.6px;font-weight:700;color:#ff2a00;white-space:pre;transform:scaleX(0.8214);transform-origin:0 0;">1</span>
<span style="position:absolute;left:743.94px;top:780.75px;font-size:31px;line-height:31px;font-weight:700;color:#ff2a00;white-space:pre;transform:scaleX(0.9600);transform-origin:0 0;">2</span>
</body></html>
